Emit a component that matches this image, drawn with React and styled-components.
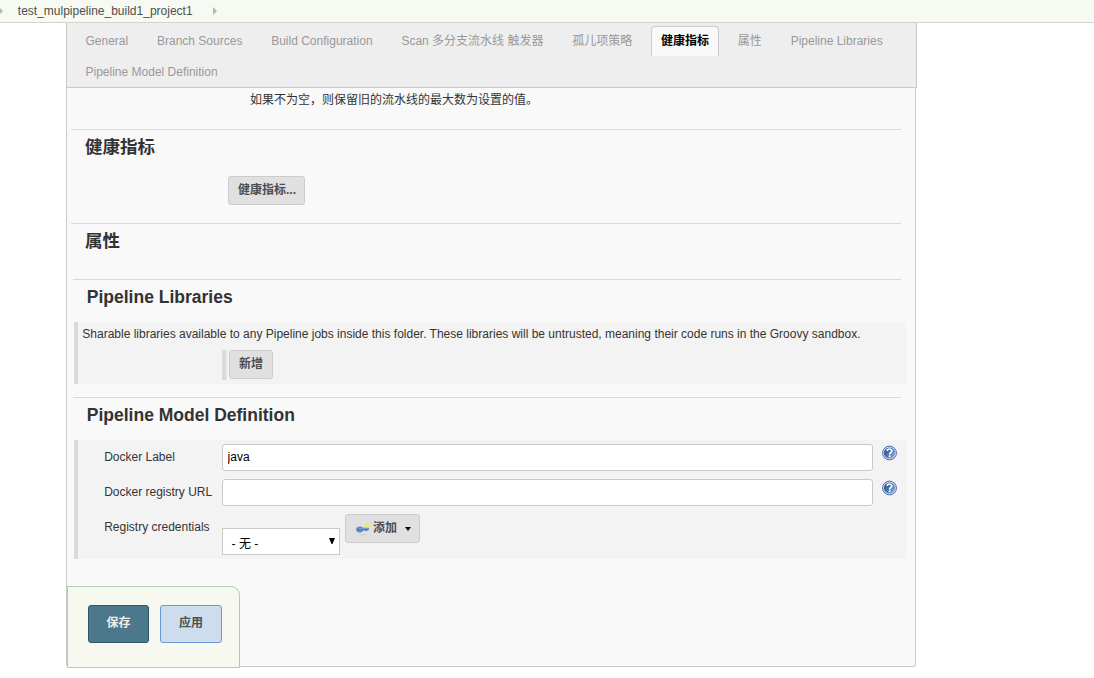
import React from "react";
import styled, { createGlobalStyle } from "styled-components";

const GlobalStyle = createGlobalStyle`
  *, *::before, *::after { box-sizing: border-box; }
  body {
    margin: 0;
    background: #fff;
    color: #333;
    font: 12px/16px "Liberation Sans", Helvetica, "Noto Sans CJK SC", sans-serif;
    overflow: hidden;
  }
`;

const Page = styled.div`
  height: 678px;
`;

const Breadcrumbs = styled.nav`
  display: flex;
  align-items: center;
  height: 23px;
  padding-bottom: 1px;
  background: #f6faf2;
  border-bottom: 1px solid #d3d4cc;
`;

const Crumb = styled.span`
  margin: 0 20px 0 14.8px;
  color: #4f4f4f;
`;

const Chevron = styled.span`
  border: 4px solid transparent;
  border-left: 4px solid #b4b7b0;
  border-right: 0;
  margin-left: ${(p) => (p.$first ? "-1px" : "0")};
`;

const TabBar = styled.div`
  display: flex;
  flex-wrap: wrap;
  align-content: flex-start;
  gap: 1px 8.8px;
  width: 851px;
  height: 65px;
  margin-left: 66px;
  padding: 3px 8px 0 8.5px;
  background: #eee;
  border: 1px solid #c9c9c9;
  border-top: 0;
`;

const Tab = styled.div`
  height: 30px;
  padding: 6px 9px 0;
  border: 1px solid ${(p) => (p.$active ? "#ccc" : "transparent")};
  border-bottom: 0;
  border-radius: 4px 4px 0 0;
  background: ${(p) => (p.$active ? "#f9f9f9" : "transparent")};
  color: ${(p) => (p.$active ? "#000" : "#999")};
  font-weight: ${(p) => (p.$active ? 700 : 400)};
  white-space: nowrap;
`;

const Panel = styled.main`
  display: flex;
  flex-direction: column;
  width: 850px;
  height: 579px;
  margin-left: 66px;
  background: #f9f9f9;
  border: 1px solid #c9c9c9;
  border-top: 0;
  border-radius: 0 0 3px 3px;
`;

const Description = styled.p`
  height: 41px;
  margin: 0;
  padding: 4px 0 0 183px;
`;

const Section = styled.section`
  height: ${(p) => p.$height}px;
  margin-left: ${(p) => (p.$nested ? 5.8 : 4)}px;
  margin-right: 14px;
  border-top: 1px solid #d9d9d9;
`;

const Title = styled.h2`
  height: 42px;
  margin: 0;
  padding: 6px 0 0 14px;
  font-size: 17.5px;
  line-height: 22px;
`;

const ButtonRow = styled.div`
  padding: 4px 0 0 157px;
`;

const Button = styled.button`
  display: inline-flex;
  align-items: center;
  width: ${(p) => p.$width}px;
  height: 29px;
  padding: 0 9px 1px;
  border: 1px solid #ccc;
  border-radius: 3px;
  background: #e0e0e0;
  color: #4d4d4d;
  font: bold 12px/16px "Liberation Sans", "Noto Sans CJK SC", sans-serif;
  white-space: nowrap;
`;

const Block = styled.div`
  width: 832px;
  height: ${(p) => p.$height}px;
  margin-left: 1.2px;
  padding: 4px 0 0 4px;
  border-left: 4px solid #dadada;
  background: #f3f3f3;
`;

const BlockText = styled.p`
  height: 24px;
  margin: 0;
  padding-left: 0.3px;
  white-space: nowrap;
`;

const Repeatable = styled.div`
  display: flex;
  height: 30px;
  margin-left: 140px;
  padding-left: 3px;
  border-left: 4px solid #dadada;
  box-shadow: inset 1px 0 #e8e8e8;
`;

const Field = styled.div`
  display: flex;
  align-items: flex-start;
  height: 35px;
`;

const Label = styled.label`
  width: 118px;
  margin-left: 22px;
  padding: 5px 0 0 0.2px;
  white-space: nowrap;
`;

const Input = styled.input`
  width: 651px;
  height: 27px;
  padding: 0 4.6px 2px;
  border: 1px solid #c9c9c9;
  border-radius: 3px;
  background: #fff;
  color: #000;
  font: 12px/16px "Liberation Sans", sans-serif;
`;

const HelpSvg = styled.svg`
  margin: 1px 0 0 9px;
`;

const Select = styled.div`
  display: flex;
  justify-content: space-between;
  width: 118px;
  height: 27px;
  margin: 14px 5px 0 0;
  padding: 7px 4px 0 8.6px;
  border: 1px solid #c9c9c9;
  background: #fff;
  color: #000;
`;

const SelectArrow = styled.span`
  width: 6px;
  height: 6px;
  margin-top: 2px;
  background: #000;
  clip-path: polygon(0 0, 100% 0, 58% 100%, 42% 100%);
`;

const MenuArrow = styled.span`
  margin: 2px 0 0 7.5px;
  border: 3.5px solid transparent;
  border-top: 4px solid #000;
  border-bottom: 0;
`;

const KeySvg = styled.svg`
  flex: none;
  margin: 1px 3px 0 1px;
`;

const Footer = styled.footer`
  display: flex;
  gap: 11px;
  width: 173px;
  height: 82px;
  margin: auto 0 -2px;
  padding: 18px 0 0 20px;
  border: 1px solid #adcdb8;
  border-radius: 0 9px 0 0;
  background: #f7f9f0;
`;

const FooterButton = styled.button`
  width: ${(p) => (p.$primary ? 61 : 62)}px;
  height: 38px;
  padding: 0 0 2px;
  border: 1px solid ${(p) => (p.$primary ? "#2f566a" : "#6999d2")};
  border-radius: 3px;
  background: ${(p) => (p.$primary ? "#4b788a" : "#cdddee")};
  color: ${(p) => (p.$primary ? "#eee" : "#4d4d4d")};
  font: bold 12px/16px "Liberation Sans", "Noto Sans CJK SC", sans-serif;
`;

const Help = () => (
  <HelpSvg width="15" height="16" viewBox="0 0 15 16" aria-label="Help">
    <defs>
      <linearGradient id="helpFill" x1="0" y1="0" x2="1" y2="0.7">
        <stop offset="0" stopColor="#254b91" />
        <stop offset="0.5" stopColor="#4670ae" />
        <stop offset="1" stopColor="#86a9d5" />
      </linearGradient>
    </defs>
    <circle cx="7.5" cy="8" r="6.9" fill="#d5e0f0" stroke="#4a6fac" />
    <circle cx="7.5" cy="8" r="5.6" fill="url(#helpFill)" />
    <path d="M5.2 6.1C5.2 3.4 9.8 3.4 9.8 6C9.8 7.6 7.6 7.4 7.6 9.4" fill="none" stroke="#fff" strokeWidth="1.6" />
    <rect x="6.7" y="10.4" width="1.8" height="1.7" fill="#fff" />
  </HelpSvg>
);

const KeyIcon = () => (
  <KeySvg width="14" height="14" viewBox="0 0 14 14" aria-hidden="true">
    <ellipse cx="6.5" cy="12.6" rx="4.5" ry="0.6" fill="#cccccc" />
    <circle cx="10.8" cy="3.5" r="2.3" fill="#f3ea58" />
    <ellipse cx="3.7" cy="7.4" rx="3.5" ry="3" fill="#6089c0" />
    <path d="M5 5.7H12.8V8.3H11.5V9H9.5V8.5H6Z" fill="#527db8" />
    <path d="M2.5 6.5H12.5" stroke="#729acd" strokeWidth="1" />
    <circle cx="2.2" cy="7.7" r="0.8" fill="#44699e" />
  </KeySvg>
);

const tabs = [
  "General",
  "Branch Sources",
  "Build Configuration",
  "Scan 多分支流水线 触发器",
  "孤儿项策略",
  "健康指标",
  "属性",
  "Pipeline Libraries",
  "Pipeline Model Definition",
];

export default function App() {
  return (
    <Page>
      <GlobalStyle />
      <Breadcrumbs>
        <Chevron $first />
        <Crumb>test_mulpipeline_build1_project1</Crumb>
        <Chevron />
      </Breadcrumbs>
      <TabBar>
        {tabs.map((tab) => (
          <Tab key={tab} $active={tab === "健康指标"}>{tab}</Tab>
        ))}
      </TabBar>
      <Panel>
        <Description>如果不为空，则保留旧的流水线的最大数为设置的值。</Description>
        <Section $height={94}>
          <Title>健康指标</Title>
          <ButtonRow><Button $width={77}>健康指标...</Button></ButtonRow>
        </Section>
        <Section $height={56}>
          <Title>属性</Title>
        </Section>
        <Section $height={118} $nested>
          <Title>Pipeline Libraries</Title>
          <Block $height={62}>
            <BlockText>Sharable libraries available to any Pipeline jobs inside this folder. These libraries will be untrusted, meaning their code runs in the Groovy sandbox.</BlockText>
            <Repeatable><Button $width={44}>新增</Button></Repeatable>
          </Block>
        </Section>
        <Section $height={162} $nested>
          <Title>Pipeline Model Definition</Title>
          <Block $height={119}>
            <Field>
              <Label htmlFor="docker-label">Docker Label</Label>
              <Input id="docker-label" defaultValue="java" />
              <Help />
            </Field>
            <Field>
              <Label htmlFor="registry-url">Docker registry URL</Label>
              <Input id="registry-url" />
              <Help />
            </Field>
            <Field>
              <Label>Registry credentials</Label>
              <Select>- 无 -<SelectArrow /></Select>
              <Button $width={75}><KeyIcon />添加<MenuArrow /></Button>
            </Field>
          </Block>
        </Section>
        <Footer>
          <FooterButton $primary>保存</FooterButton>
          <FooterButton>应用</FooterButton>
        </Footer>
      </Panel>
    </Page>
  );
}
